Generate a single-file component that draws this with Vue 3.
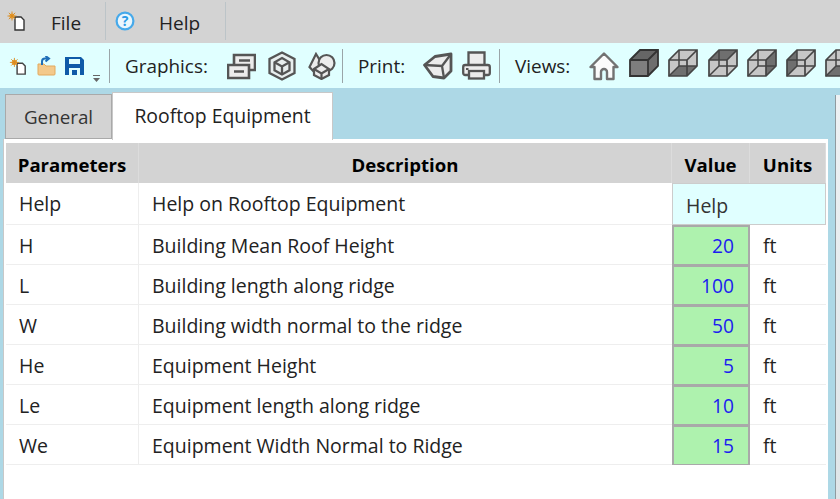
<script setup>
const rows = [
  { p: 'H', d: 'Building Mean Roof Height', v: 20 },
  { p: 'L', d: 'Building length along ridge', v: 100 },
  { p: 'W', d: 'Building width normal to the ridge', v: 50 },
  { p: 'He', d: 'Equipment Height', v: 5 },
  { p: 'Le', d: 'Equipment length along ridge', v: 10 },
  { p: 'We', d: 'Equipment Width Normal to Ridge', v: 15 }
]
const faces = {
  top: '1,11 11,1 29,1 19,11',
  bottom: '1,27 11,17 29,17 19,27',
  left: '1,11 11,1 11,17 1,27',
  right: '19,11 29,1 29,17 19,27'
}
const views = [
  { key: 'v2', dark: 'bottom' },
  { key: 'v3', dark: 'top' },
  { key: 'v4', dark: 'right' },
  { key: 'v5', dark: 'left' },
  { key: 'v6', dark: 'bottom' }
]
</script>

<template>
  <div class="app">
    <header class="menubar">
      <div class="menu-item file-item">
        <svg width="20" height="20" viewBox="0 0 20 20">
          <path d="M9 6h6l3 3v10H9z" fill="#fff" stroke="#333" stroke-width="1.400"/>
          <circle cx="6" cy="5" r="2.600" fill="#e9a23b"/>
          <path d="M6 .5v9M1.500 5h9M2.800 1.800l6.400 6.400M9.200 1.800L2.800 8.200" stroke="#d98a1e" stroke-width=".9"/>
        </svg>
        <span class="menu-label">File</span>
      </div>
      <div class="menu-item help-item">
        <svg width="20" height="20" viewBox="0 0 20 20">
          <circle cx="10" cy="10" r="8.400" fill="#eaf6fd" stroke="#46a9ea" stroke-width="2.200"/>
          <text x="10" y="15" text-anchor="middle" class="q">?</text>
        </svg>
        <span class="menu-label">Help</span>
      </div>
    </header>

    <nav class="toolbar">
      <svg class="i-new" width="18" height="20" viewBox="0 0 20 20">
        <path d="M9 7h6l3 3v9H9z" fill="#fff" stroke="#444" stroke-width="1.600"/>
        <circle cx="6" cy="6" r="3" fill="#e9a23b"/>
        <path d="M6 1v10M1 6h10M2.500 2.500l7 7M9.500 2.500l-7 7" stroke="#d98a1e" stroke-width="1"/>
      </svg>
      <svg class="i-open" width="19" height="20" viewBox="0 0 19 20">
        <path d="M1 8h6l2 2h9v8a1 1 0 0 1-1 1H2a1 1 0 0 1-1-1z" fill="#f3c98b" stroke="#e3a95c"/>
        <path d="M5 9V5.500a3 3 0 0 1 3-3h3M8.500 0l3.500 2.500L8.500 5.500" fill="none" stroke="#1f6fb8" stroke-width="2"/>
      </svg>
      <svg class="i-save" width="19" height="20" viewBox="0 0 19 20">
        <path d="M0 1h16l3 3v15H0z" fill="#0f5aa8"/>
        <rect x="4" y="3" width="11" height="5" fill="#e0ffff"/>
        <rect x="4" y="12" width="11" height="7" fill="#e0ffff"/>
        <rect x="7" y="14" width="5" height="5" fill="#0f5aa8"/>
      </svg>
      <svg class="i-drop" width="9" height="8" viewBox="0 0 9 8">
        <path d="M1 .5h7" stroke="#666" stroke-width="1"/>
        <path d="M1 3h7L4.500 7z" fill="#666"/>
      </svg>
      <span class="sep sep-a"></span>
      <span class="tb-label graphics">Graphics:</span>

      <svg class="g1" width="29" height="28" viewBox="0 0 29 28">
        <g fill="#ececec" stroke="#555" stroke-width="2.600">
          <path d="M7 3h21v15H7z"/>
          <path d="M1 13h21v13H1z"/>
        </g>
        <path d="M7 19.500h10M12 8.500h11" stroke="#555" stroke-width="2.400"/>
      </svg>
      <svg class="g2" width="28" height="30" viewBox="0 0 28 30">
        <g fill="none" stroke="#555" stroke-width="2.300">
          <path d="M14 1.500L26.500 8v14L14 28.500 1.500 22V8z" fill="#e8eeee"/>
          <path d="M14 7l7.500 4.300v8L14 23.500l-7.500-4.200v-8z"/>
          <path d="M6.500 11.300L14 15.500l7.500-4.200M14 15.500v8"/>
        </g>
      </svg>
      <svg class="g3" width="28" height="28" viewBox="0 0 28 28">
        <g fill="#ececec" stroke="#555" stroke-width="2.200">
          <path d="M8 2L1.500 15 8 22l8-7z"/>
          <circle cx="18.500" cy="11" r="8"/>
          <path d="M6 17l7.500-5 7.500 5v6l-7.500 4L6 23z"/>
          <path d="M6 17l7.500 4.500L21 17M13.500 21.500V27" fill="none"/>
        </g>
      </svg>
      <span class="sep sep-b"></span>
      <span class="tb-label print">Print:</span>
      <svg class="p1" width="30" height="28" viewBox="0 0 30 28">
        <path d="M1.500 13L12 4.500 28 2v17l-7 7-11-1.500z" fill="#ececec" stroke="#555" stroke-width="2.800" stroke-linejoin="round"/>
        <path d="M1.500 13L19 14 28 2M19 14l2 12" fill="none" stroke="#555" stroke-width="2.300"/>
      </svg>
      <svg class="p2" width="29" height="29" viewBox="0 0 29 29">
        <g stroke="#555" stroke-width="2.300" fill="#ececec">
          <path d="M6.500 16V1.500h16V16z"/>
          <rect x="1.200" y="14" width="26.600" height="10" rx="2"/>
          <rect x="7" y="20" width="15" height="7.500"/>
        </g>
        <rect x="4" y="17" width="2.500" height="2" fill="#555"/>
      </svg>
      <span class="sep sep-c"></span>
      <span class="tb-label viewsl">Views:</span>
      <svg class="home" width="30" height="30" viewBox="0 0 30 30">
        <path d="M15 2.500L1.500 16h4v12h6.500v-7a3 3 0 0 1 6 0v7h6.500V16h4z" fill="#fbfbfb" stroke="#727272" stroke-width="2.400" stroke-linejoin="round"/>
      </svg>
      <svg class="cube first" width="30" height="29" viewBox="0 0 30 29">
        <path d="M1 11L11 1h18v16L19 27H1z" fill="#6e6e6e"/>
        <path d="M1 11L11 1h18L19 11z" fill="#666"/>
        <rect x="1" y="11" width="18" height="16" fill="#7e7e7e"/>
        <path d="M1 11L11 1h18v16L19 27H1zM1 11h18v16M19 11L29 1" fill="none" stroke="#333" stroke-width="1.800"/>
      </svg>
      <svg v-for="c in views" :key="c.key" class="cube" width="30" height="29" viewBox="0 0 30 29">
        <path d="M1 11L11 1h18v16L19 27H1z" fill="#c6c6c6"/>
        <polygon :points="faces[c.dark]" fill="#6f6f6f"/>
        <path d="M11 1v16H29M11 17L1 27" fill="none" stroke="#444" stroke-width="1.500"/>
        <path d="M1 11L11 1h18v16L19 27H1zM1 11h18v16M19 11L29 1" fill="none" stroke="#444" stroke-width="1.700"/>
      </svg>
    </nav>

    <main class="workspace">
      <section class="main-col">
        <div class="tabs">
          <div class="tab inactive">General</div>
          <div class="tab active">Rooftop Equipment</div>
        </div>
        <div class="panel">
          <div class="grid">
            <div class="h c-p">Parameters</div>
            <div class="h c-d">Description</div>
            <div class="h c-v">Value</div>
            <div class="h c-u">Units</div>

            <div class="cell c-p tall">Help</div>
            <div class="cell c-d tall">Help on Rooftop Equipment</div>
            <div class="help-value">Help</div>

            <template v-for="r in rows" :key="r.p">
              <div class="cell c-p">{{ r.p }}</div>
              <div class="cell c-d">{{ r.d }}</div>
              <div class="val">{{ r.v }}</div>
              <div class="cell unit">ft</div>
            </template>
          </div>
        </div>
      </section>
      <aside class="side"></aside>
    </main>
  </div>
</template>

<style scoped>
.app {
  width: 840px;
  height: 499px;
  overflow: hidden;
  display: flex;
  flex-direction: column;
  background: #add8e6;
  font-family: "Open Sans", "Noto Sans", sans-serif;
  font-size: 19.5px;
  color: #222;
}
.menubar {
  height: 43px;
  flex: none;
  background: #d3d3d3;
  display: flex;
  padding-top: 2px;
  box-sizing: border-box;
}
.menu-item {
  height: 38px;
  display: flex;
  align-items: center;
  border-right: 1px solid #bcc4c8;
  box-sizing: border-box;
}
.file-item { width: 106px; padding-left: 6px; }
.help-item { width: 120px; padding-left: 9px; }
.file-item .menu-label { margin-left: 25px; }
.help-item .menu-label { margin-left: 24px; }
.menu-label { font-size: 19px; color: #222; padding-top: 4px; }
.q { font: 700 14px "Open Sans", sans-serif; fill: #2b9be6; }

.toolbar {
  height: 45px;
  flex: none;
  background: #e0ffff;
  display: flex;
  align-items: center;
  overflow: hidden;
  padding-left: 9px;
  box-sizing: border-box;
}
.toolbar svg { flex: none; }
.i-open { margin-left: 10px; }
.i-save { margin-left: 9px; }
.i-drop { margin-left: 8px; margin-top: 26px; }
.sep { flex: none; width: 1px; height: 34px; background: #9aa5a8; }
.sep-a { margin-left: 8px; }
.tb-label { flex: none; font-size: 18.900px; color: #222; white-space: nowrap; }
.graphics { margin-left: 15px; width: 83px; }
.g1 { margin-left: 19px; }
.g2 { margin-left: 12px; }
.g3 { margin-left: 12px; }
.sep-b { margin-left: 6px; }
.print { margin-left: 15px; width: 47px; }
.p1 { margin-left: 18px; }
.p2 { margin-left: 9px; }
.sep-c { margin-left: 8px; }
.viewsl { margin-left: 15px; width: 57px; }
.home { margin-left: 17px; }
.cube { margin-left: 9.300px; margin-top: -4px; }
.cube.first { margin-left: 10px; }

.workspace {
  flex: 1;
  min-height: 0;
  display: flex;
  padding-left: 3px;
}
.main-col {
  width: 825px;
  flex: none;
  display: flex;
  flex-direction: column;
}
.side {
  margin-left: 7px;
  flex: 1;
  margin-top: 7px;
  background: linear-gradient(#eef2f4, #dfe5e8);
  border-left: 1px solid #8f9ba0;
}
.tabs {
  height: 51px;
  flex: none;
  display: flex;
  align-items: flex-end;
  padding-left: 2px;
}
.tab {
  box-sizing: border-box;
  display: flex;
  align-items: center;
  justify-content: center;
}
.inactive {
  width: 107px;
  height: 45px;
  background: #d3d3d3;
  border: 1px solid #a9a9a9;
  color: #333;
  font-size: 18.800px;
}
.active {
  width: 221px;
  height: 48px;
  background: #fff;
  border: 1px solid #c8c8c8;
  border-bottom: none;
  margin-bottom: -1px;
  position: relative;
  padding-bottom: 2px;
  color: #222;
  font-size: 19.400px;
}
.panel {
  flex: 1;
  background: #fff;
  padding: 4px 2px 0 2px;
  box-sizing: border-box;
  border-left: 1px solid #c8c8c8;
}
.grid {
  display: grid;
  grid-template-columns: 133px 533px 78px 76px;
  grid-template-rows: 40px 42px repeat(6, 40px);
}
.h {
  background: #d3d3d3;
  font-weight: 700;
  font-size: 18.600px;
  color: #000;
  display: flex;
  align-items: center;
  justify-content: center;
  border-right: 1px solid #dcdcdc;
  padding-top: 3px;
  box-sizing: border-box;
}
.cell {
  display: flex;
  align-items: center;
  padding: 1px 0 0 13px;
  border-bottom: 1px solid #eee;
  color: #222;
  box-sizing: border-box;
  white-space: nowrap;
}
.cell.tall { padding-top: 0; }
.cell.c-p { border-right: 1px solid #eee; }
.help-value {
  grid-column: span 2;
  background: #e0ffff;
  border: 1px solid #ccc;
  box-sizing: border-box;
  display: flex;
  align-items: center;
  padding: 2px 0 0 13px;
  color: #333;
}
.val {
  background: #aef2ae;
  border: 2px solid #a9a9a9;
  border-width: 2px 2px 1px;
  box-sizing: border-box;
  color: #1c1cf0;
  font-size: 19.200px;
  display: flex;
  align-items: center;
  justify-content: flex-end;
  padding-right: 14px;
}
.unit { padding-left: 13px; color: #222; }
</style>
